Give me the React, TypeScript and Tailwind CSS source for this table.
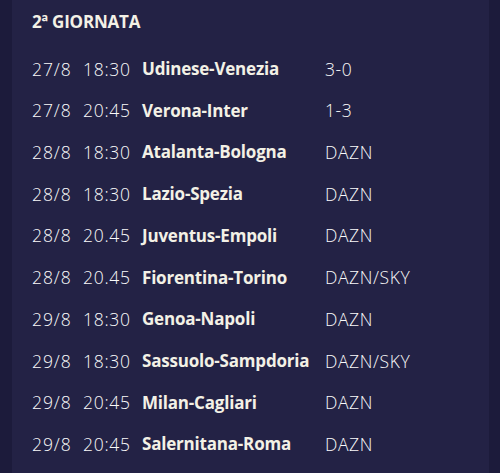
import React from "react";

const rows = [
  ["27/8", "18:30", "Udinese-Venezia", "3-0"],
  ["27/8", "20:45", "Verona-Inter", "1-3"],
  ["28/8", "18:30", "Atalanta-Bologna", "DAZN"],
  ["28/8", "18:30", "Lazio-Spezia", "DAZN"],
  ["28/8", "20.45", "Juventus-Empoli", "DAZN"],
  ["28/8", "20.45", "Fiorentina-Torino", "DAZN/SKY"],
  ["29/8", "18:30", "Genoa-Napoli", "DAZN"],
  ["29/8", "18:30", "Sassuolo-Sampdoria", "DAZN/SKY"],
  ["29/8", "20:45", "Milan-Cagliari", "DAZN"],
  ["29/8", "20:45", "Salernitana-Roma", "DAZN"],
];

export default function App() {
  return (
    <div
      className="w-[500px] h-[473px] overflow-hidden flex bg-[#1c1b3b]"
      style={{ fontFamily: '"Open Sans", "Noto Sans", sans-serif' }}
    >
      <div className="ml-[12px] w-[477px] h-full bg-[#232245] flex flex-col pl-[20px] text-[#f3f1e6]">
        <div className="h-[30px] mt-[7px] flex items-center text-[17px] font-bold tracking-[-0.2px]">
          2ª GIORNATA
        </div>
        <div className="mt-[11px] flex flex-col">
          {rows.map((r, i) => (
            <div key={i} className="h-[41.7px] flex items-center text-[17px] whitespace-nowrap">
              <span className="w-[51px] text-[17.5px] font-[350] tracking-[0.9px] text-[#fafafa]">{r[0]}</span>
              <span className="w-[59px] text-[17.5px] font-[350] tracking-[0.7px] text-[#fafafa]">{r[1]}</span>
              <span className="w-[183px] font-bold tracking-[-0.2px]">{r[2]}</span>
              <span className="text-[17.5px] font-[350] tracking-[0.6px] text-[#fafafa]">{r[3]}</span>
            </div>
          ))}
        </div>
      </div>
    </div>
  );
}
